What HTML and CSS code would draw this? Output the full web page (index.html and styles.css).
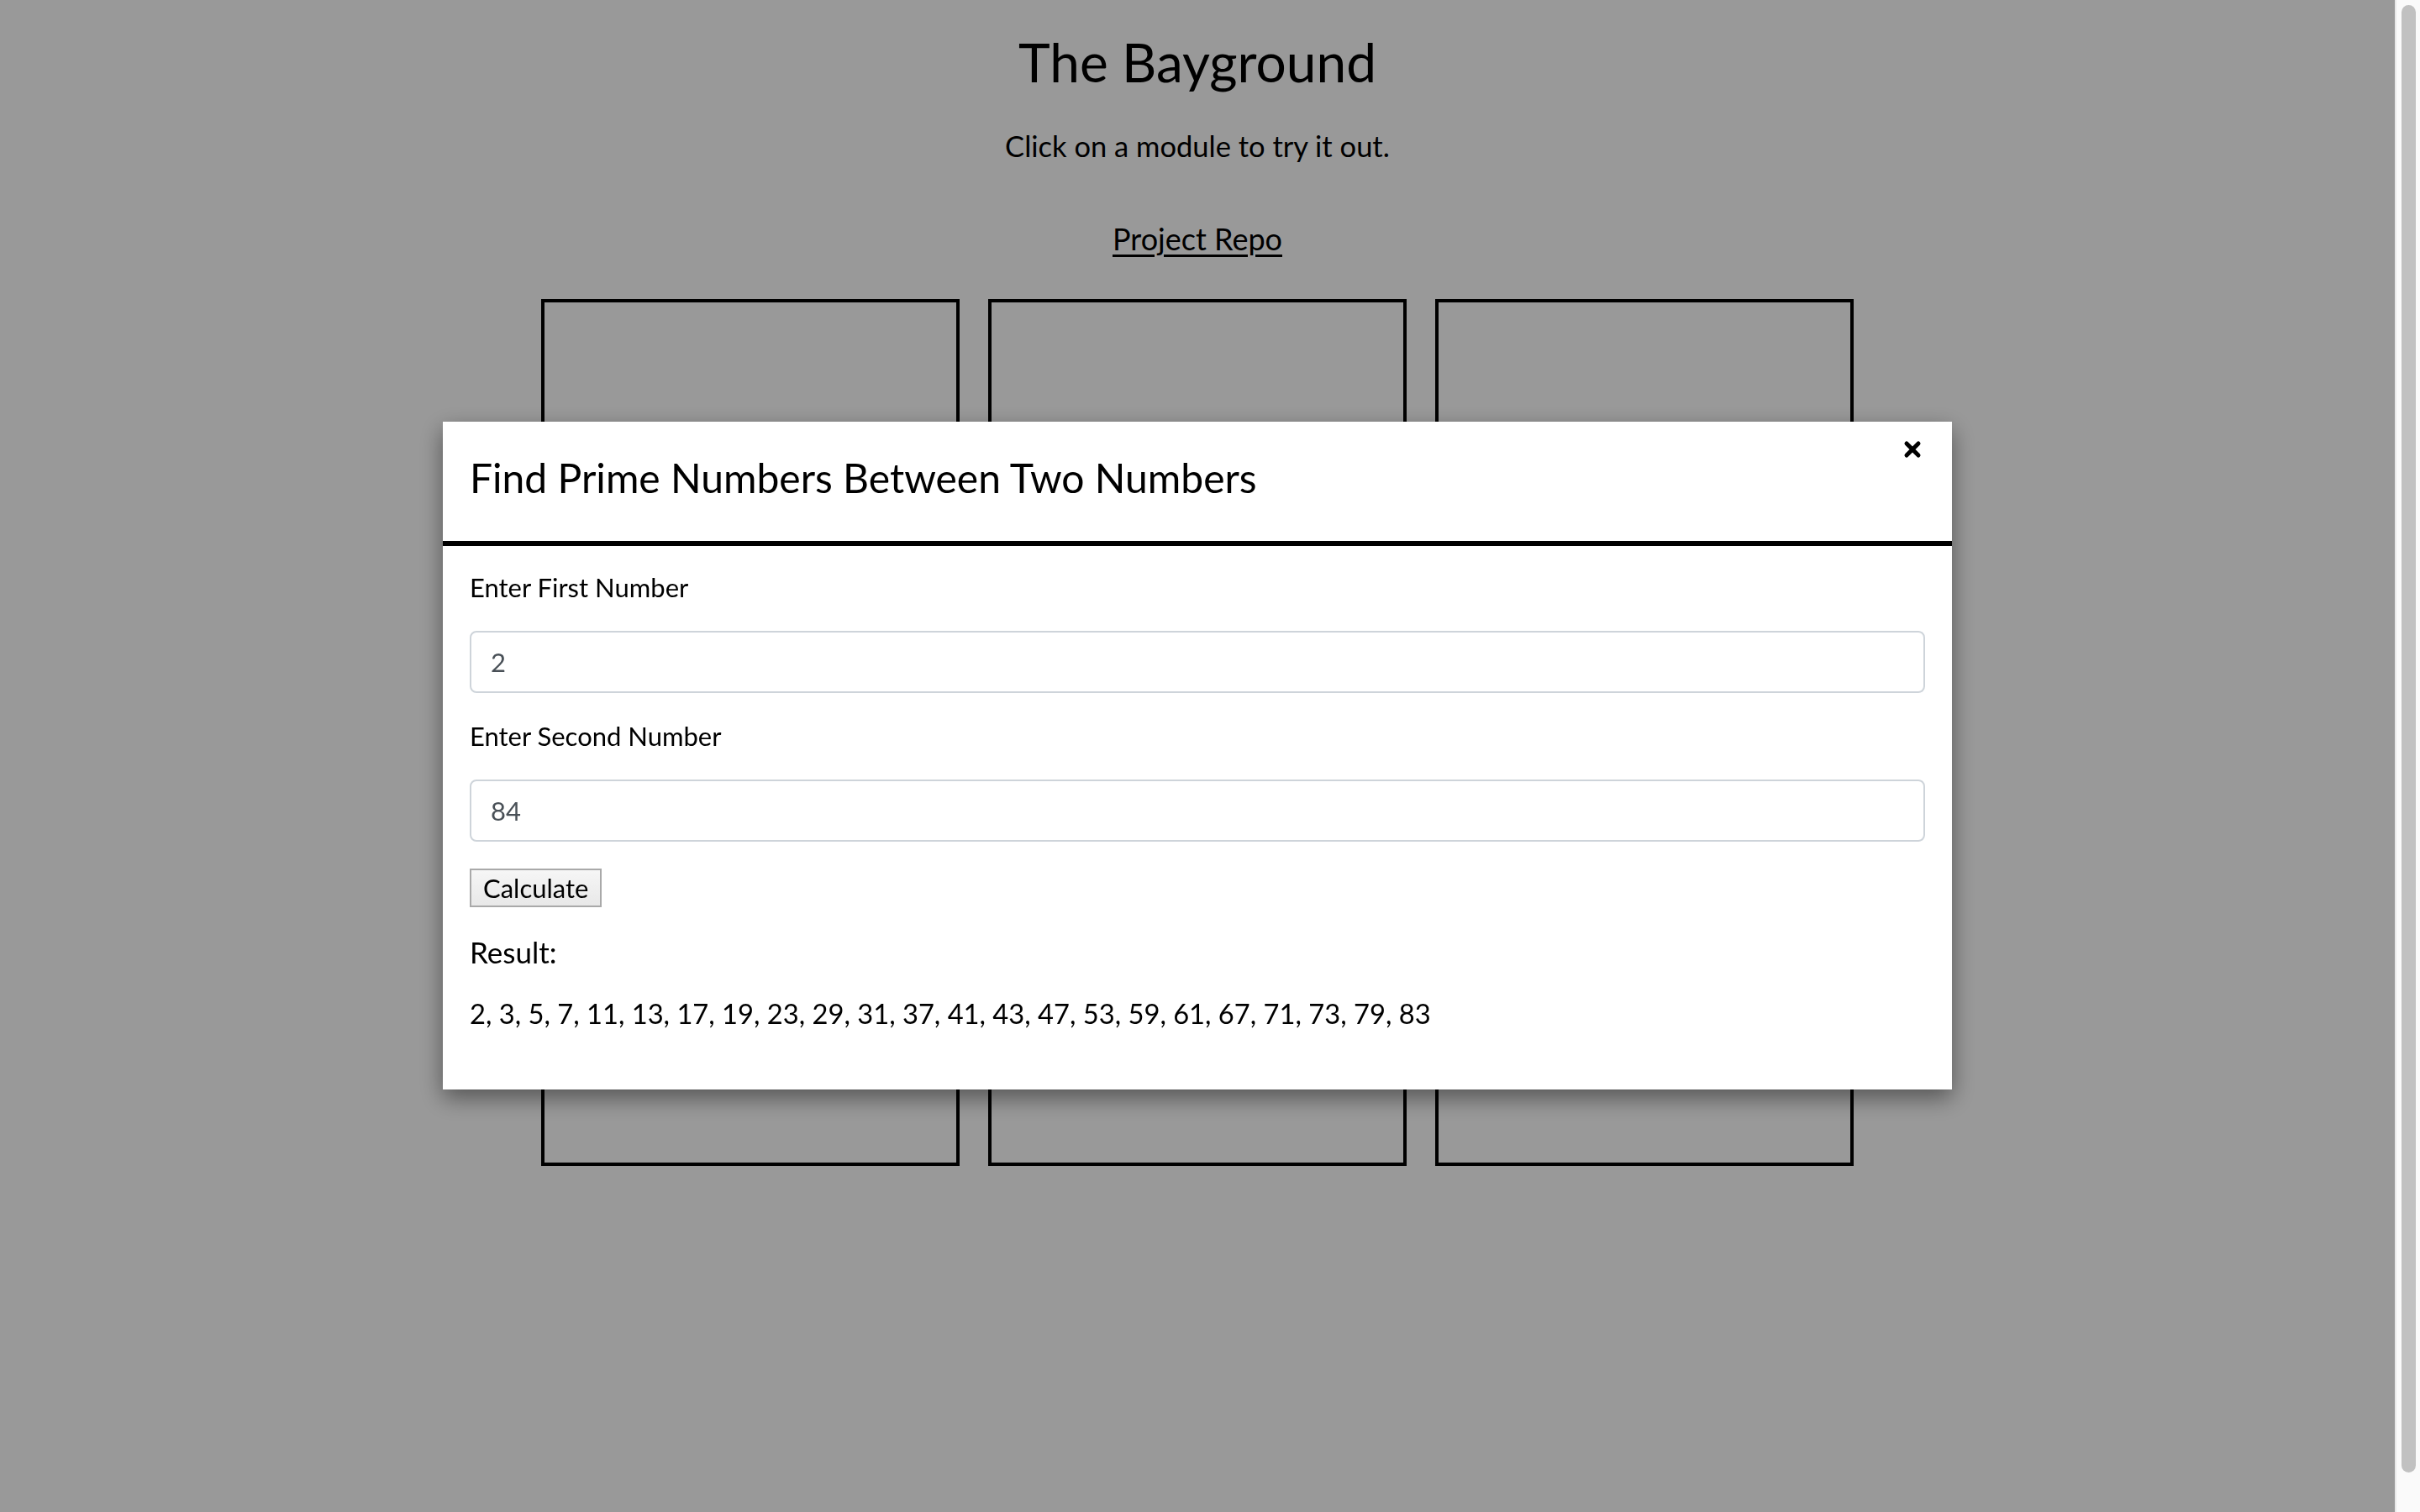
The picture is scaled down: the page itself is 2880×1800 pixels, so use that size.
FILE: index.html
```html
<!DOCTYPE html>
<html lang="en">
<head>
<meta charset="utf-8">
<title>The Bayground</title>
<link rel="stylesheet" href="styles.css">
</head>
<body class="window">
<div class="viewport">
  <main class="page">
    <header class="intro">
      <h1 class="intro-title">The Bayground</h1>
      <p class="intro-text">Click on a module to try it out.</p>
      <a class="intro-link" href="#">Project Repo</a>
    </header>
    <section class="modules">
      <div class="module-card"></div>
      <div class="module-card"></div>
      <div class="module-card"></div>
    </section>
  </main>
</div>
<div class="scrollbar" aria-hidden="true">
  <div class="scrollbar-thumb"></div>
</div>

<div class="overlay">
  <div class="modal">
    <div class="modal-header">
      <h2 class="modal-title">Find Prime Numbers Between Two Numbers</h2>
      <button class="modal-close" type="button" aria-label="Close">
        <svg class="close-icon" viewBox="0 0 22 22" width="22" height="22">
          <path d="M4 4 L18 18 M18 4 L4 18" stroke="#000" stroke-width="5" stroke-linecap="round" fill="none"/>
        </svg>
      </button>
    </div>
    <div class="modal-body">
      <div class="form-group">
        <label class="form-label" for="first">Enter First Number</label>
        <input class="form-input" id="first" type="text" value="2">
      </div>
      <div class="form-group">
        <label class="form-label" for="second">Enter Second Number</label>
        <input class="form-input" id="second" type="text" value="84">
      </div>
      <button class="calc-button" type="button">Calculate</button>
      <p class="result-label">Result:</p>
      <p class="result-value">2, 3, 5, 7, 11, 13, 17, 19, 23, 29, 31, 37, 41, 43, 47, 53, 59, 61, 67, 71, 73, 79, 83</p>
    </div>
  </div>
</div>
</body>
</html>
```

FILE: styles.css
```css
body {
  margin: 0;
  background: #ffffff;
  color: #000000;
  font-family: Lato, "Liberation Sans", sans-serif;
}

.window {
  display: flex;
  height: 100vh;
  overflow: hidden;
}

.viewport {
  flex: 1;
  min-width: 0;
  overflow: hidden;
}

.scrollbar {
  box-sizing: border-box;
  width: 30px;
  flex: 0 0 30px;
  padding: 6px 5px 47px 6px;
  background: #fafafa;
  border-left: 2px solid #e8e8e8;
  display: flex;
  flex-direction: column;
}

.scrollbar-thumb {
  flex: 1;
  background: #c1c1c1;
  border-radius: 9px;
}

.page {
  padding: 34px 0 454px;
}

.intro {
  display: flex;
  flex-direction: column;
  align-items: center;
  text-align: center;
}

.intro-title {
  margin: 0;
  font-size: 64px;
  line-height: 80px;
  font-weight: 400;
}

.intro-text {
  margin: 38px 0 0;
  font-size: 34.5px;
  line-height: 44px;
}

.intro-link {
  margin-top: 66px;
  font-size: 36px;
  line-height: 44px;
  color: #000000;
  text-decoration: underline;
  text-decoration-thickness: 3px;
  text-underline-offset: 5px;
}

.modules {
  display: flex;
  justify-content: center;
  gap: 34px;
  margin-top: 50px;
}

.module-card {
  box-sizing: border-box;
  width: 498px;
  height: 1032px;
  border: 4px solid #000000;
}

.overlay {
  position: fixed;
  top: 0;
  left: 0;
  bottom: 0;
  right: 30px;
  background: rgba(0, 0, 0, 0.4);
  display: flex;
  justify-content: center;
  align-items: flex-start;
  padding-top: 502px;
}

.modal {
  width: 1796px;
  background: #ffffff;
  box-shadow: 0 10px 26px rgba(0, 0, 0, 0.45);
}

.modal-header {
  position: relative;
  padding: 38px 32px 46px;
  border-bottom: 6px solid #000000;
}

.modal-title {
  margin: 0;
  font-size: 48px;
  line-height: 58px;
  font-weight: 400;
}

.modal-close {
  position: absolute;
  top: 22px;
  right: 36px;
  padding: 0;
  margin: 0;
  border: 0;
  background: none;
  width: 22px;
  height: 22px;
  display: block;
}

.close-icon {
  display: block;
}

.modal-body {
  padding: 32px 32px 70px;
}

.form-group {
  display: flex;
  flex-direction: column;
  margin-bottom: 34px;
}

.form-group:last-of-type {
  margin-bottom: 32px;
}

.form-label {
  font-size: 31px;
  line-height: 34px;
  margin-bottom: 35px;
}

.form-input {
  box-sizing: border-box;
  height: 74px;
  width: 100%;
  padding: 0 23px;
  border: 2px solid #ced4da;
  border-radius: 8px;
  background: #ffffff;
  color: #495057;
  font-family: Lato, "Liberation Sans", sans-serif;
  font-size: 31px;
  outline: none;
}

.calc-button {
  display: block;
  box-sizing: border-box;
  height: 46px;
  padding: 0 14px;
  border: 2px solid #a9a9a9;
  background: linear-gradient(#f6f6f6, #e8e8e8);
  color: #000000;
  font-family: Lato, "Liberation Sans", sans-serif;
  font-size: 31px;
  line-height: 40px;
}

.result-label {
  margin: 32px 0 0;
  font-size: 35px;
  line-height: 42px;
}

.result-value {
  margin: 33px 0 0;
  font-size: 32.7px;
  line-height: 40px;
}
```
